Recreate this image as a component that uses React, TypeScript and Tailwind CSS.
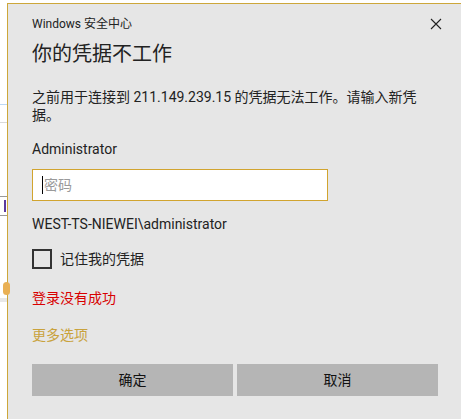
import React from 'react';

const font = { fontFamily: 'Roboto, "Noto Sans CJK SC", sans-serif' };

export default function App() {
  return (
    <div className="relative w-[461px] h-[419px] bg-white overflow-hidden flex" style={font}>
      {/* bits of the window behind the dialog */}
      <div className="w-[7px] shrink-0 relative">
        <div className="absolute left-0 top-[104px] w-[7px] h-px bg-[#bcd8f4]" />
        <div className="absolute left-0 top-[122px] w-[7px] h-px bg-[#d9d9d9]" />
        <div className="absolute left-0 top-[196px] w-[7px] h-[20px] border-y border-[#999] bg-white" />
        <div className="absolute left-[1px] top-[200px] w-[5px] h-[12px] border-r-2 border-[#5b3a9e]" />
        <div className="absolute left-[3px] top-[282px] w-[7px] h-[13px] rounded-full bg-[#e9b054]" />
        <div className="absolute left-0 top-[298px] w-[7px] h-[4px] bg-[#e8e8e8]" />
      </div>

      <div className="flex-1 mt-[3px] border-l border-t border-[#cda73a] bg-[#e6e6e6] pl-6 pr-[23px] flex flex-col text-[#1a1a1a]">
        <div className="flex items-center justify-between pt-[8px] h-[32px]">
          <span className="text-[12px] leading-[16px] text-[#222]">Windows 安全中心</span>
          <svg width="12" height="12" viewBox="0 0 12 12" className="mr-[-4px]">
            <path d="M1 1 L11 11 M11 1 L1 11" stroke="#222" strokeWidth="1.1" />
          </svg>
        </div>

        <div className="mt-[4px] text-[20px] leading-[28px] h-[28px] text-[#222]">你的凭据不工作</div>

        <p className="mt-[20px] text-[14px] leading-[18px] text-[#222]">
          <span className="block h-[18px]">之前用于连接到 211.149.239.15 的凭据无法工作。请输入新凭</span>
          <span className="block h-[18px]">据。</span>
        </p>

        <div className="mt-[15px] text-[14px] leading-[20px] h-[20px] text-[#222]">Administrator</div>

        <div className="mt-[10px] w-[296px] h-[32px] border border-[#d1a42f] bg-white flex items-center pl-[9px]">
          <span className="w-px h-[18px] bg-black mr-[1px]" />
          <span className="text-[14px] text-[#9a9a9a]">密码</span>
        </div>

        <div className="mt-[13px] text-[14px] leading-[20px] h-[20px] text-[#222]">WEST-TS-NIEWEI\administrator</div>

        <div className="mt-[15px] flex items-center gap-[8px] h-[20px]">
          <span className="w-[20px] h-[20px] border-2 border-[#333] shrink-0" />
          <span className="text-[14px] leading-[20px] text-[#222]">记住我的凭据</span>
        </div>

        <div className="mt-[19px] text-[14px] leading-[20px] h-[20px] text-[#d80000]">登录没有成功</div>

        <div className="mt-[17px] text-[14px] leading-[20px] h-[20px] text-[#c9a23c]">更多选项</div>

        <div className="mt-[19px] grid grid-cols-2 gap-[4px]">
          <button className="h-[32px] bg-[#b5b5b5] text-[14px] text-[#111]">确定</button>
          <button className="h-[32px] bg-[#b5b5b5] text-[14px] text-[#111]">取消</button>
        </div>
      </div>
    </div>
  );
}
